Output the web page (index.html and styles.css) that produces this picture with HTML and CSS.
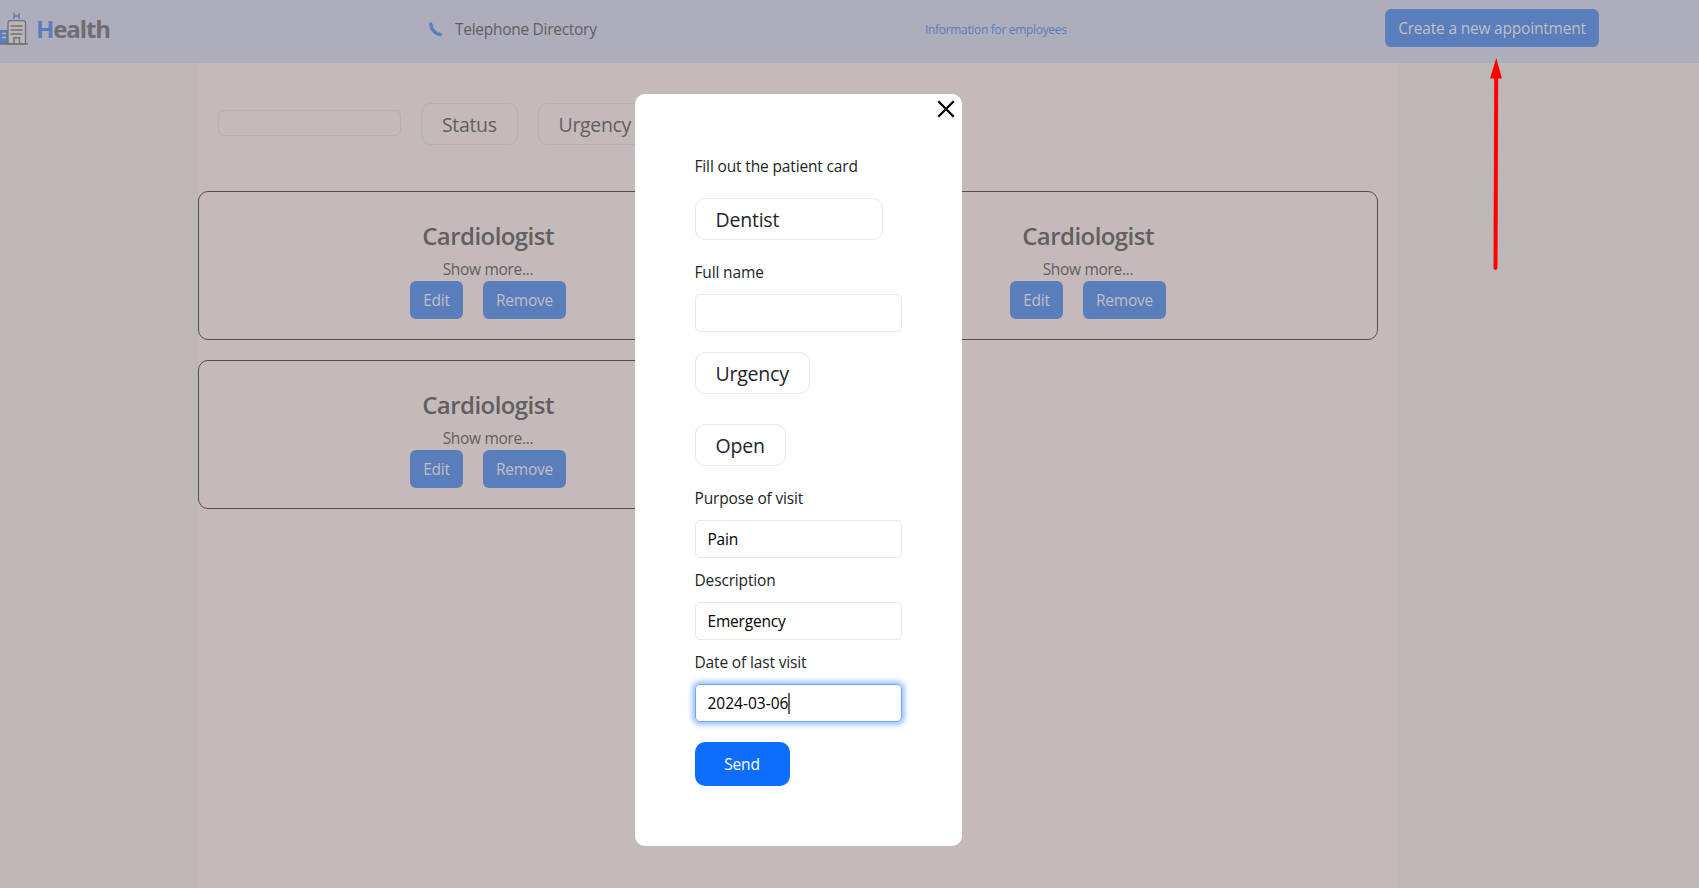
FILE: index.html
```html
<!DOCTYPE html>
<html lang="en">
<head>
<meta charset="utf-8">
<title>Health</title>
<link rel="stylesheet" href="styles.css">
</head>
<body>
<header class="header">
  <a class="logo">
    <svg class="logo-icon" width="28" height="34" viewBox="0 0 28 34" fill="none">
      <path d="M14 1v6M19 1v6M14 4h5" stroke="#5a7dbc" stroke-width="1.600"/>
      <path d="M0 18h8v14H0z" fill="#5a7dbc"/>
      <path d="M2 21.500h4M2 25.500h4" stroke="#bab6b8" stroke-width="1.600"/>
      <path d="M8 32V11q0-2.300 2.300-2.300h12.900q2.300 0 2.300 2.300V32z" fill="#bab6b8" stroke="#747177" stroke-width="1.300"/>
      <path d="M10.500 14h12M10.500 18h12M10.500 22h12" stroke="#747177" stroke-width="1.500"/>
      <path d="M14 32v-6.300h5.500V32M0 32h28" stroke="#747177" stroke-width="1.500"/>
    </svg>
    <span class="logo-text"><span class="logo-accent">H</span>ealth</span>
  </a>
  <a class="phone">
    <svg width="14" height="15" viewBox="0 0 14 15"><path d="M1 .5Q2.300-.2 3.200 1.200L4.200 3.500 4.100 5.200Q6 8.500 9 10.600L10.600 10.600 13 12Q14 13 12.400 14 9 14.800 5.200 11.800 1 8.200.3 3.500 0 1.500 1 .5z" fill="#5a7dbc"/></svg>
    <span>Telephone Directory</span>
  </a>
  <a class="info">Information for employees</a>
  <button class="btn create">Create a new appointment</button>
</header>
<main class="main">
  <div class="filters">
    <div class="search"></div>
    <div class="select">Status</div>
    <div class="select">Urgency</div>
  </div>
  <div class="cards">
    <article class="card"><h2 class="card-title">Cardiologist</h2><p class="more">Show more...</p><div class="actions"><button class="btn edit">Edit</button><button class="btn remove">Remove</button></div></article>
    <article class="card"><h2 class="card-title">Cardiologist</h2><p class="more">Show more...</p><div class="actions"><button class="btn edit">Edit</button><button class="btn remove">Remove</button></div></article>
    <article class="card"><h2 class="card-title">Cardiologist</h2><p class="more">Show more...</p><div class="actions"><button class="btn edit">Edit</button><button class="btn remove">Remove</button></div></article>
  </div>
</main>
<form class="modal">
  <svg class="close" width="18" height="18" viewBox="0 0 18 18"><path d="M1.300 1.300l15.400 15.400M16.700 1.300L1.300 16.700" stroke="#000" stroke-width="2.300"/></svg>
  <div class="label intro">Fill out the patient card</div>
  <div class="select doctor">Dentist</div>
  <div class="label">Full name</div>
  <div class="field"></div>
  <div class="select urgency">Urgency</div>
  <div class="select status">Open</div>
  <div class="label">Purpose of visit</div>
  <div class="field">Pain</div>
  <div class="label tight">Description</div>
  <div class="field">Emergency</div>
  <div class="label tight">Date of last visit</div>
  <div class="field focused">2024-03-06<span class="caret"></span></div>
  <button class="send" type="button">Send</button>
</form>
<svg class="arrow" width="14" height="214" viewBox="0 0 14 214"><path d="M7.200 20L6.500 210" stroke="#f00" stroke-width="4" stroke-linecap="round"/><path d="M7.300 0L13 20.500H1z" fill="#f00"/></svg>
</body>
</html>
```
FILE: styles.css
```css
* { box-sizing: border-box; }
body {
  margin: 0;
  height: 888px;
  overflow: hidden;
  background: #bdb8b7;
  color: #625e61;
  font: 15.5px/25px "Open Sans", "Noto Sans", sans-serif;
  letter-spacing: -0.2px;
}
button { font: inherit; letter-spacing: inherit; border: 0; padding: 1px 0 0; }
.header {
  display: grid;
  grid-template-columns: 429px 496px 460px 214px;
  height: 63px;
  padding-top: 9px;
  background: #adadbb;
}
.logo { display: flex; gap: 8px; height: 40px; }
.logo-icon { margin-top: 3px; flex: none; }
.logo-text { font-size: 24px; font-weight: 700; line-height: 40px; color: #706c72; letter-spacing: -1.1px; }
.logo-accent { color: #5a7dbc; }
.phone { display: flex; align-items: center; gap: 12px; height: 40px; letter-spacing: -0.28px; }
.info { font-size: 12px; line-height: 42px; color: #5a7dbc; letter-spacing: -0.32px; }
.btn { height: 38px; border-radius: 6px; background: #5a7dbc; color: #c2bfc3; }
.main { width: 1200px; height: 825px; margin-left: 198px; background: #c4baba; }
.filters { display: flex; gap: 20px; padding: 40px 20px 46px; }
.search { width: 183px; height: 26px; margin-top: 7px; border: 1px solid #b5b0b1; border-radius: 6px; }
.select {
  width: max-content;
  height: 42px;
  padding: 0 20px;
  border: 1px solid #b5b0b1;
  border-radius: 10px;
  font-size: 19.5px;
  line-height: 42px;
  letter-spacing: -0.35px;
}
.cards { display: grid; grid-template-columns: 580px 580px; gap: 20px; }
.card { display: flex; flex-direction: column; align-items: center; height: 149px; padding-top: 29px; border: 1px solid #554c4d; border-radius: 10px; }
.card-title { margin: 0; height: 36px; font-size: 24px; font-weight: 600; line-height: 29px; letter-spacing: -0.55px; }
.more { margin: 0; height: 24px; letter-spacing: -0.3px; }
.actions { display: flex; gap: 20px; }
.edit { width: 53px; }
.remove { width: 83px; }
.modal {
  position: absolute;
  left: 634.500px;
  top: 94px;
  width: 327px;
  height: 752px;
  padding: 60px;
  border-radius: 10px;
  background: #fff;
  color: #212529;
}
.close { position: absolute; right: 6.500px; top: 6px; }
.label { height: 24px; margin: 20px 0 10px; letter-spacing: -0.15px; }
.label.intro { margin: 0 0 20px; }
.label.tight { margin-top: 10px; }
.modal .select { border-color: #e7e8e9; letter-spacing: -0.22px; }
.modal .doctor { width: 188px; }
.urgency { margin: 20px 0 30px; }
.field { display: flex; align-items: center; height: 38px; padding: 1px 12px 0; border: 1px solid #e7e8e9; border-radius: 5px; color: #000; }
.focused { border-color: #6ea8fe; box-shadow: 0 0 5px 3px #9cc4fe; letter-spacing: 0; }
.caret { width: 1.500px; height: 21px; background: #666; }
.send { width: 95px; height: 44px; margin-top: 20px; border-radius: 10px; background: #0d6efd; color: #fff; }
.arrow { position: absolute; left: 1489px; top: 58px; }
```
